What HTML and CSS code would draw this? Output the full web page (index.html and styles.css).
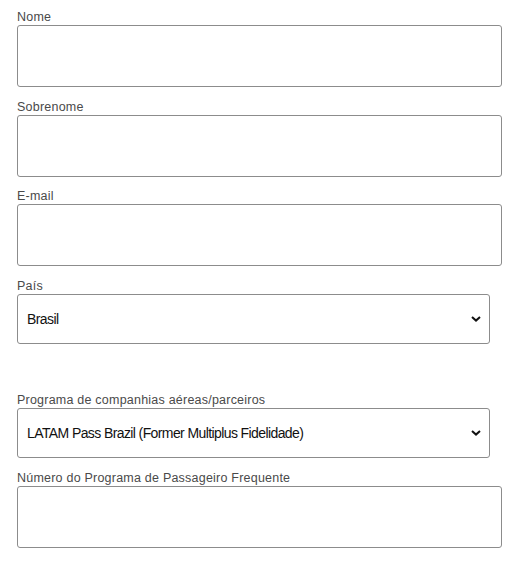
FILE: index.html
```html
<!DOCTYPE html>
<html lang="pt-BR">
<head>
<meta charset="utf-8">
<title>Formulário</title>
<link rel="stylesheet" href="styles.css">
</head>
<body>
<form class="form">
  <div class="field">
    <label class="label" for="nome">Nome</label>
    <input class="input" id="nome" type="text">
  </div>
  <div class="field">
    <label class="label" for="sobrenome">Sobrenome</label>
    <input class="input" id="sobrenome" type="text">
  </div>
  <div class="field">
    <label class="label" for="email">E-mail</label>
    <input class="input" id="email" type="email">
  </div>
  <div class="field field-gap">
    <label class="label" for="pais">País</label>
    <div class="select-wrap">
      <select class="select" id="pais">
        <option>Brasil</option>
      </select>
      <svg class="chevron" width="10" height="6" viewBox="0 0 10 6"><path d="M1 1 L5 4.6 L9 1" fill="none" stroke="#111" stroke-width="2"/></svg>
    </div>
  </div>
  <div class="field">
    <label class="label" for="programa">Programa de companhias aéreas/parceiros</label>
    <div class="select-wrap">
      <select class="select" id="programa">
        <option>LATAM Pass Brazil (Former Multiplus Fidelidade)</option>
      </select>
      <svg class="chevron" width="10" height="6" viewBox="0 0 10 6"><path d="M1 1 L5 4.6 L9 1" fill="none" stroke="#111" stroke-width="2"/></svg>
    </div>
  </div>
  <div class="field">
    <label class="label" for="numero">Número do Programa de Passageiro Frequente</label>
    <input class="input" id="numero" type="text">
  </div>
</form>
</body>
</html>
```

FILE: styles.css
```css
html, body {
  margin: 0;
  padding: 0;
  background: #fff;
}

.form {
  padding: 9px 0 0 17px;
  display: flex;
  flex-direction: column;
}

.field {
  display: flex;
  flex-direction: column;
  margin-bottom: 11.5px;
}

.field-gap {
  margin-bottom: 48.5px;
}

.label {
  font-family: "Liberation Sans", Arial, sans-serif;
  font-size: 12.5px;
  line-height: 16px;
  letter-spacing: 0.22px;
  color: #4a4a4a;
}

.input {
  box-sizing: border-box;
  width: 485px;
  height: 62px;
  margin: 0;
  border: 1px solid #8c8c8c;
  border-radius: 3px;
  background: #fff;
  font-family: "Liberation Sans", Arial, sans-serif;
  font-size: 14px;
  padding: 0 9px;
}

.select-wrap {
  position: relative;
  width: 473px;
}

.select {
  box-sizing: border-box;
  width: 473px;
  height: 50px;
  margin: 0;
  border: 1px solid #8c8c8c;
  border-radius: 3px;
  background: #fff;
  appearance: none;
  -webkit-appearance: none;
  font-family: "Liberation Sans", Arial, sans-serif;
  font-size: 14px;
  letter-spacing: -0.6px;
  color: #111;
  padding: 0 30px 0 9px;
}

.chevron {
  position: absolute;
  right: 9px;
  top: 22px;
}
```
